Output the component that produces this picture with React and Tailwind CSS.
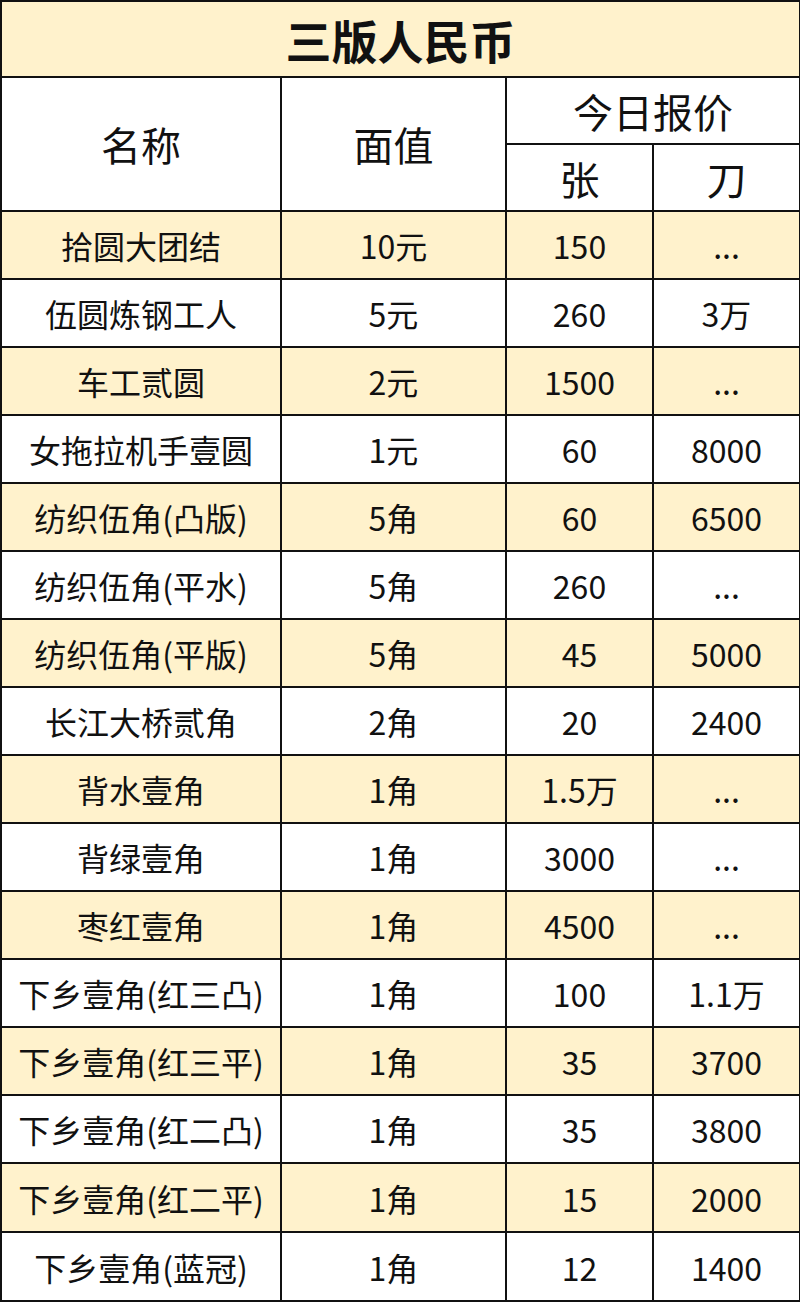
import React from 'react';

const rows = [
  ['拾圆大团结', '10元', '150', '...'],
  ['伍圆炼钢工人', '5元', '260', '3万'],
  ['车工贰圆', '2元', '1500', '...'],
  ['女拖拉机手壹圆', '1元', '60', '8000'],
  ['纺织伍角(凸版)', '5角', '60', '6500'],
  ['纺织伍角(平水)', '5角', '260', '...'],
  ['纺织伍角(平版)', '5角', '45', '5000'],
  ['长江大桥贰角', '2角', '20', '2400'],
  ['背水壹角', '1角', '1.5万', '...'],
  ['背绿壹角', '1角', '3000', '...'],
  ['枣红壹角', '1角', '4500', '...'],
  ['下乡壹角(红三凸)', '1角', '100', '1.1万'],
  ['下乡壹角(红三平)', '1角', '35', '3700'],
  ['下乡壹角(红二凸)', '1角', '35', '3800'],
  ['下乡壹角(红二平)', '1角', '15', '2000'],
  ['下乡壹角(蓝冠)', '1角', '12', '1400'],
];

const cell = 'border-2 border-[#111] text-center align-middle p-0';

export default function App() {
  return (
    <div className="w-[800px] h-[1306px] bg-white text-[#111]" style={{ fontFamily: '"Noto Sans CJK SC", "Noto Sans", sans-serif' }}>
      <table className="w-[799px] border-collapse table-fixed">
        <colgroup>
          <col className="w-[280px]" />
          <col className="w-[225px]" />
          <col className="w-[147px]" />
          <col className="w-[147px]" />
        </colgroup>
        <tbody>
          <tr className="h-[76px] bg-[#fff2cc]">
            <td colSpan={4} className={`${cell} text-[46px] font-bold leading-none`}>三版人民币</td>
          </tr>
          <tr className="h-[67px]">
            <td rowSpan={2} className={`${cell} text-[40px] leading-none`}>名称</td>
            <td rowSpan={2} className={`${cell} text-[40px] leading-none`}>面值</td>
            <td colSpan={2} className={`${cell} text-[40px] leading-none`}>今日报价</td>
          </tr>
          <tr className="h-[67px]">
            <td className={`${cell} text-[40px] leading-none`}>张</td>
            <td className={`${cell} text-[40px] leading-none`}>刀</td>
          </tr>
          {rows.map((r, i) => (
            <tr key={i} className={`${i >= 14 ? 'h-[69px]' : 'h-[68px]'} ${i % 2 === 0 ? 'bg-[#fff2cc]' : 'bg-white'}`}>
              {r.map((v, j) => (
                <td key={j} className={`${cell} text-[32px] leading-none whitespace-nowrap`}>{v}</td>
              ))}
            </tr>
          ))}
        </tbody>
      </table>
    </div>
  );
}
